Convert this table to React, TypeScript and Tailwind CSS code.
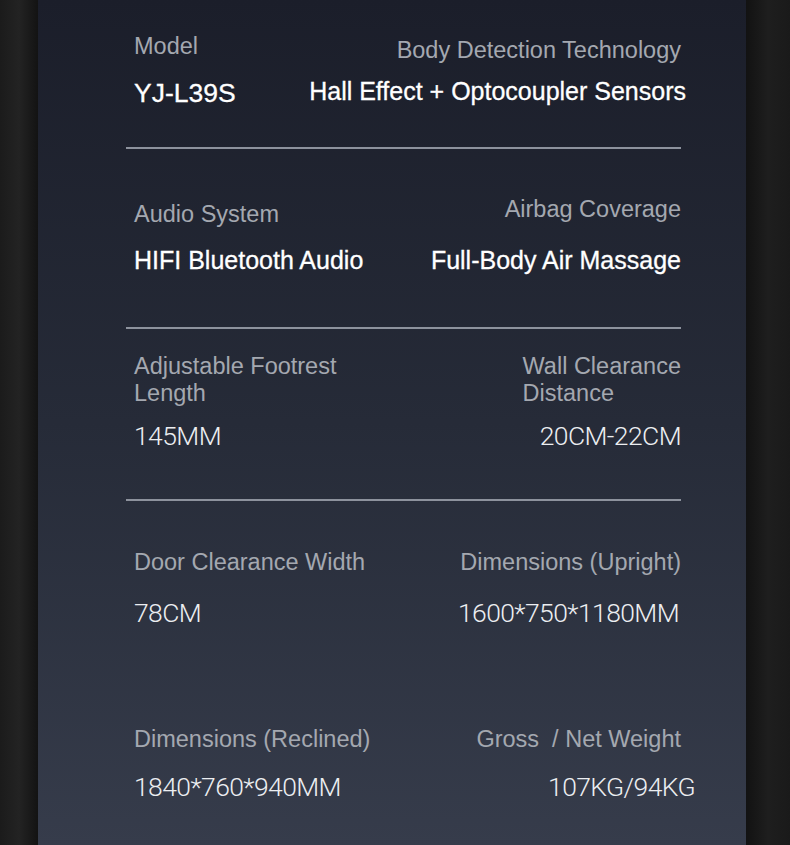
import React from "react";

const label = "text-[23.5px] leading-[26px] text-[#a4a8b0] font-['Liberation_Sans',Arial,sans-serif]";
const strong =
  "text-[25px] leading-[30px] text-white font-['Liberation_Sans',Arial,sans-serif] [-webkit-text-stroke:0.3px_white] whitespace-nowrap";
const thin =
  "text-[26.5px] leading-[30px] tracking-[-0.6px] text-[#eceef1] font-['Roboto',sans-serif] font-light whitespace-nowrap";

function Divider() {
  return <div className="ml-[-8px] h-[2px] w-[555px] bg-[#8d929d]" />;
}

export default function App() {
  return (
    <div className="flex h-[845px] w-[790px] overflow-hidden bg-[#1a1a1a]">
      <div className="h-full w-[38px] bg-linear-to-r from-[#1b1b1b] via-[#232323] to-[#131313]" />
      <div className="flex h-full w-[708px] flex-col bg-linear-to-b from-[#1b1e2a] via-[#262b38] to-[#363c4b] pl-[96px] pr-[65px]">
        {/* Row 1 */}
        <div className="flex h-[147px] justify-between">
          <div className="flex flex-col pt-[33px]">
            <div className={label}>Model</div>
            <div className={`${strong} mt-[19px] text-[26.5px]`}>YJ-L39S</div>
          </div>
          <div className="flex flex-col items-end pt-[37px]">
            <div className={label}>Body Detection Technology</div>
            <div className={`${strong} mr-[-5px] mt-[13px]`}>Hall Effect + Optocoupler Sensors</div>
          </div>
        </div>
        <Divider />
        {/* Row 2 */}
        <div className="flex h-[178px] justify-between">
          <div className="flex flex-col pt-[52px]">
            <div className={label}>Audio System</div>
            <div className={`${strong} mt-[18px]`}>HIFI Bluetooth Audio</div>
          </div>
          <div className="flex flex-col items-end pt-[47px]">
            <div className={label}>Airbag Coverage</div>
            <div className={`${strong} mt-[23px]`}>Full-Body Air Massage</div>
          </div>
        </div>
        <Divider />
        {/* Row 3 */}
        <div className="flex h-[170px] justify-between">
          <div className="flex flex-col pt-[24px]">
            <div className={`${label} leading-[27px]`}>
              Adjustable Footrest
              <br />
              Length
            </div>
            <div className={`${thin} mt-[14px]`}>145MM</div>
          </div>
          <div className="flex flex-col items-end pt-[24px]">
            <div className={`${label} ml-[2px] text-left leading-[27px]`}>
              Wall Clearance
              <br />
              Distance
            </div>
            <div className={`${thin} mt-[14px]`}>20CM-22CM</div>
          </div>
        </div>
        <Divider />
        {/* Row 4 */}
        <div className="flex justify-between">
          <div className="flex flex-col pt-[48px]">
            <div className={label}>Door Clearance Width</div>
            <div className={`${thin} mt-[23px]`}>78CM</div>
          </div>
          <div className="flex flex-col items-end pt-[48px]">
            <div className={label}>Dimensions (Upright)</div>
            <div className={`${thin} mr-[2px] mt-[23px]`}>1600*750*1180MM</div>
          </div>
        </div>
        {/* Row 5 */}
        <div className="flex justify-between pt-[98px]">
          <div className="flex flex-col">
            <div className={label}>Dimensions (Reclined)</div>
            <div className={`${thin} mt-[20px]`}>1840*760*940MM</div>
          </div>
          <div className="flex flex-col items-end">
            <div className={label}>Gross&nbsp; / Net Weight</div>
            <div className={`${thin} mr-[-14px] mt-[20px]`}>107KG/94KG</div>
          </div>
        </div>
      </div>
      <div className="h-full w-[44px] bg-linear-to-r from-[#121212] via-[#1e1e1e] to-[#1a1a1a]" />
    </div>
  );
}
